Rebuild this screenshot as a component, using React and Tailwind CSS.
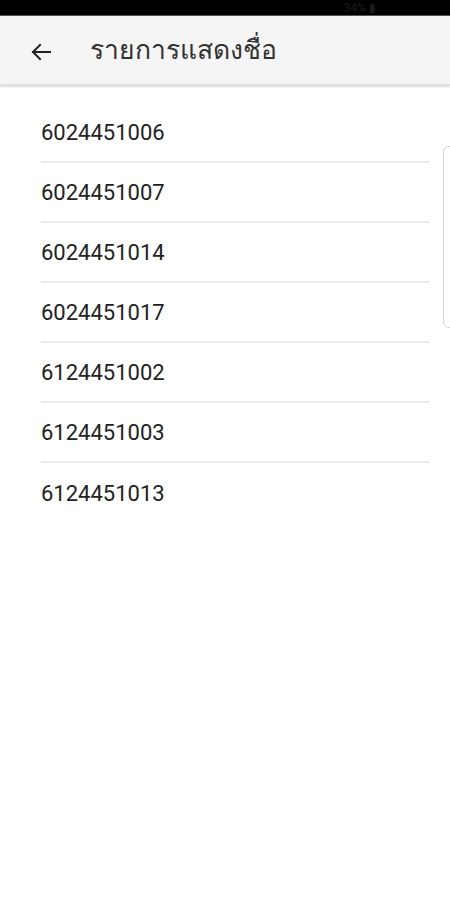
import React from "react";

const items = [
  "6024451006",
  "6024451007",
  "6024451014",
  "6024451017",
  "6124451002",
  "6124451003",
  "6124451013",
];

export default function App() {
  return (
    <div className="relative w-[450px] h-[900px] bg-white overflow-hidden" style={{ fontFamily: "Roboto, 'Noto Sans', sans-serif" }}>
      <div className="h-[16px] bg-black flex items-center justify-end pr-[74px] border-b border-[#555]">
        <span className="text-[12px] leading-none text-[#1c1c1c]">34% ▮</span>
      </div>
      <div className="h-[69px] bg-[#f5f5f5] flex items-center pt-[3px] shadow-[0_2px_2px_rgba(0,0,0,0.15)] border-b border-[#e2e2e2]">
        <div className="w-[90px] flex items-center pl-[29px]">
          <svg width="24" height="24" viewBox="0 0 24 24" fill="none" stroke="#222" strokeWidth="2" strokeLinecap="square">
            <path d="M21 12H4" />
            <path d="M11 5l-7 7 7 7" />
          </svg>
        </div>
        <span className="text-[26.5px] text-[#333] leading-none pb-[2px]">รายการแสดงชื่อ</span>
      </div>
      <div className="pt-[18px] pl-[41px] pr-[20px]">
        {items.map((it, i) => (
          <div
            key={it}
            className={`h-[60px] flex items-center text-[22px] text-[#222] ${i < items.length - 1 ? "border-b-2 border-[#ececec]" : ""}`}
          >
            {it}
          </div>
        ))}
      </div>
      <div className="absolute left-[443px] top-[146px] w-[20px] h-[182px] rounded-[6px] border border-[#d6d6d6] bg-white" />
    </div>
  );
}
